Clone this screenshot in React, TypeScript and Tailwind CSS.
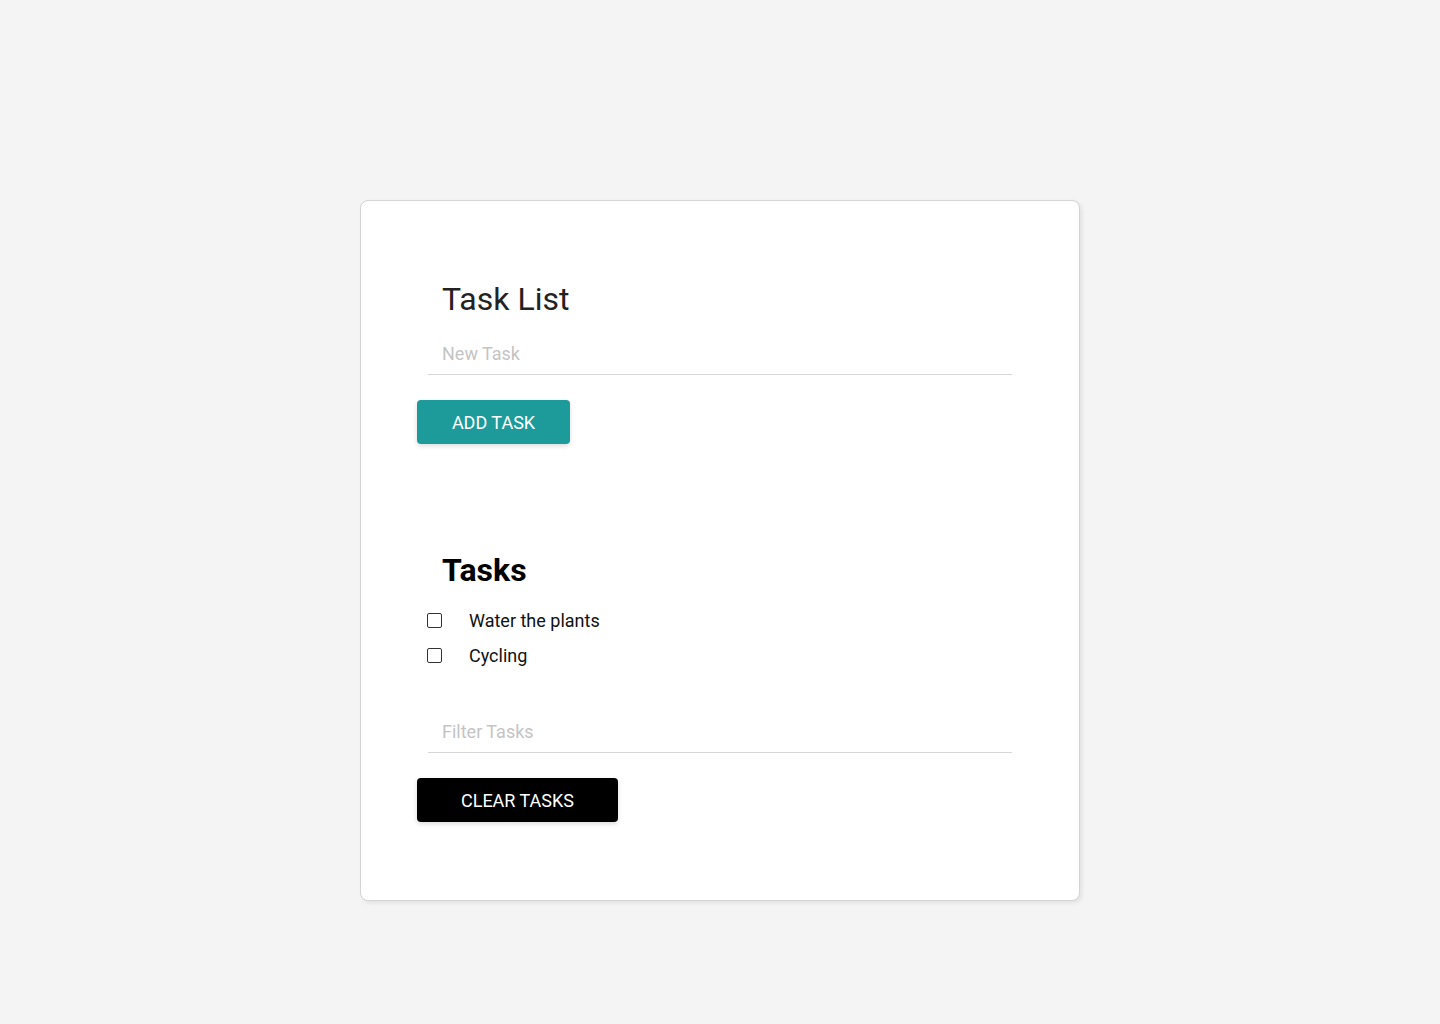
import { useState } from "react";

const FONT = "font-['Roboto','Liberation_Sans',sans-serif]";

export default function App() {
  const [tasks] = useState(["Water the plants", "Cycling"]);

  return (
    <div className={`min-h-screen bg-[#f4f4f4] pt-[200px] pb-[124px] ${FONT}`}>
      {/* Card */}
      <div className="mx-auto w-[720px] rounded-lg border border-[#d4d4d4] bg-white px-[56px] pt-[78px] pb-[78px] shadow-[2px_2px_4px_rgba(0,0,0,0.08)]">
        <h1 className="pl-[25px] text-[32px] leading-[40px] font-normal text-[#222]">Task List</h1>

        <input
          type="text"
          placeholder="New Task"
          className="mx-[11px] mt-[15px] box-border block h-[41px] w-[584px] border-b border-[#d6d6d6] px-[14px] pb-[2px] text-[18px] text-[#222] outline-none placeholder:text-[#c4c4c4]"
        />

        <button className="mt-[25px] flex h-[44px] w-[153px] items-center justify-center rounded-[4px] bg-[#1d9a9a] text-[18px] text-white uppercase shadow-[0_2px_5px_rgba(0,0,0,0.14)]">
          Add Task
        </button>

        {/* Task list */}
        <h2 className="mt-[106px] pl-[25px] text-[32px] leading-[40px] font-bold text-black">Tasks</h2>

        <ul className="mt-[13px]">
          {tasks.map((t) => (
            <li key={t} className="flex h-[35px] items-center pl-[10px] text-[18px] text-[#111]">
              <input
                type="checkbox"
                className="h-[15px] w-[15px] appearance-none rounded-[2px] border border-[#333] bg-white checked:bg-[#1d9a9a]"
              />
              <span className="ml-[27px]">{t}</span>
            </li>
          ))}
        </ul>

        <input
          type="text"
          placeholder="Filter Tasks"
          className="mx-[11px] mt-[39px] box-border block h-[41px] w-[584px] border-b border-[#d6d6d6] px-[14px] pb-[2px] text-[18px] text-[#222] outline-none placeholder:text-[#c4c4c4]"
        />

        <button className="mt-[25px] flex h-[44px] w-[201px] items-center justify-center rounded-[4px] bg-black text-[18px] text-white uppercase shadow-[0_2px_5px_rgba(0,0,0,0.14)]">
          Clear Tasks
        </button>
      </div>
    </div>
  );
}
